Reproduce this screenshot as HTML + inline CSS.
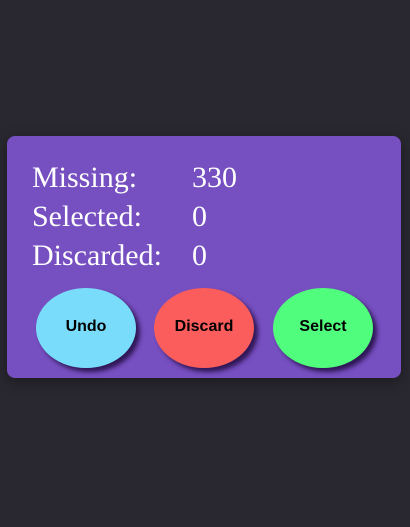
<!DOCTYPE html>
<html><head><style>
body{margin:0;width:410px;height:527px;background:#292830;position:relative;overflow:hidden}
.card{position:absolute;left:7px;top:136px;width:394px;height:242px;background:#764fc0;border-radius:8px;box-shadow:0 4px 14px rgba(0,0,0,.35)}
.row{position:absolute;left:25px;font-family:"Liberation Serif",serif;font-size:30px;color:#fff;line-height:39px;white-space:nowrap}
.row span{position:absolute;left:160px}
.btn{position:absolute;top:152px;width:100px;height:80px;border-radius:50%;font-family:"Liberation Sans",sans-serif;font-weight:bold;font-size:16px;display:flex;align-items:center;justify-content:center;color:#000;box-shadow:4px 4px 4px rgba(30,10,60,.8);padding-bottom:2px;box-sizing:border-box}
</style></head><body>
<div class="card">
<div class="row" style="top:22px">Missing:<span>330</span></div>
<div class="row" style="top:61px">Selected:<span>0</span></div>
<div class="row" style="top:100px">Discarded:<span>0</span></div>
<div class="btn" style="left:29px;background:#7adcfb">Undo</div>
<div class="btn" style="left:147px;background:#fb5c5c">Discard</div>
<div class="btn" style="left:266px;background:#51fd7d">Select</div>
</div>
</body></html>
